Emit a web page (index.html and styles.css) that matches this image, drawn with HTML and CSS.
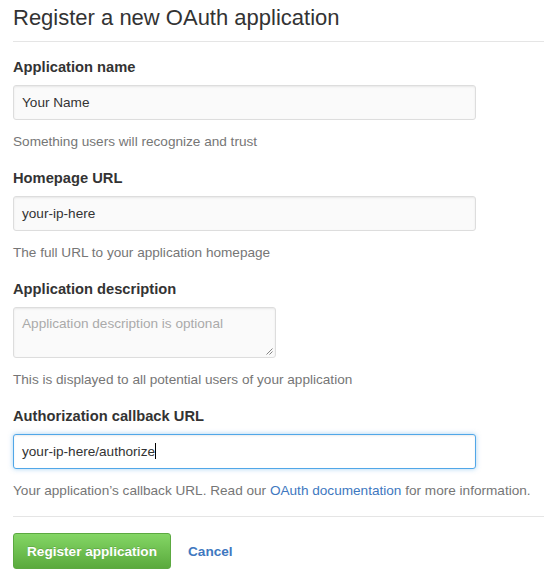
FILE: index.html
```html
<!DOCTYPE html>
<html>
<head>
<meta charset="utf-8">
<link rel="stylesheet" href="styles.css">
</head>
<body>
<div class="page">
  <h1 class="title">Register a new OAuth application</h1>
  <form class="form">
    <div class="group">
      <label class="label">Application name</label>
      <div class="input">Your Name</div>
      <p class="note">Something users will recognize and trust</p>
    </div>
    <div class="group">
      <label class="label">Homepage URL</label>
      <div class="input">your-ip-here</div>
      <p class="note">The full URL to your application homepage</p>
    </div>
    <div class="group">
      <label class="label">Application description</label>
      <div class="textarea"><span class="placeholder">Application description is optional</span>
        <svg class="grip" width="7" height="7" viewBox="0 0 7 7"><path d="M6.5 0.5 L0.5 6.5 M6.5 3.5 L3.5 6.5" stroke="#777" stroke-width="0.9" fill="none"/></svg>
      </div>
      <p class="note">This is displayed to all potential users of your application</p>
    </div>
    <div class="group">
      <label class="label">Authorization callback URL</label>
      <div class="input focused">your-ip-here/authorize<span class="caret"></span></div>
      <p class="note">Your application’s callback URL. Read our <a class="link">OAuth documentation</a> for more information.</p>
    </div>
    <div class="actions">
      <button type="button" class="btn">Register application</button>
      <a class="cancel">Cancel</a>
    </div>
  </form>
</div>
</body>
</html>
```

FILE: styles.css
```css
html, body {
  margin: 0;
  padding: 0;
  background: #fff;
}
body {
  font-family: "Liberation Sans", Arial, sans-serif;
  color: #333;
  font-size: 13.6px;
}
.page {
  padding-left: 13px;
}
.title {
  margin: 0;
  padding-top: 4px;
  line-height: 28px;
  font-size: 22px;
  font-weight: normal;
  color: #333;
  border-bottom: 1px solid #e5e5e5;
  box-sizing: border-box;
  height: 42px;
}
.form {
  padding-top: 15px;
}
.group {
  margin-bottom: 17px;
}
.label {
  display: block;
  font-weight: bold;
  font-size: 14.7px;
  line-height: 20px;
  margin-bottom: 8px;
}
.input {
  box-sizing: border-box;
  width: 463px;
  height: 35px;
  padding: 0 8px;
  line-height: 33px;
  font-size: 13.6px;
  background: #fafafa;
  border: 1px solid #ddd;
  border-radius: 3px;
  box-shadow: inset 0 1px 2px rgba(0,0,0,0.075);
  color: #333;
}
.input.focused {
  background: #fff;
  border-color: #51a7e8;
  box-shadow: inset 0 1px 2px rgba(0,0,0,0.075), 0 0 5px rgba(81,167,232,0.5);
}
.caret {
  display: inline-block;
  width: 1px;
  height: 16px;
  background: #000;
  vertical-align: middle;
  margin-top: -2px;
}
.textarea {
  position: relative;
  box-sizing: border-box;
  width: 263px;
  height: 51px;
  padding: 7px 8px;
  background: #fafafa;
  border: 1px solid #ddd;
  border-radius: 3px;
  box-shadow: inset 0 1px 2px rgba(0,0,0,0.075);
  line-height: 18px;
}
.placeholder {
  color: #aaa;
}
.grip {
  position: absolute;
  right: 2px;
  bottom: 2px;
}
.note {
  margin: 13px 0 0;
  font-size: 13.6px;
  line-height: 18px;
  color: #767676;
}
.link {
  color: #4078c0;
  text-decoration: none;
}
.actions {
  margin-top: -1px;
  border-top: 1px solid #e5e5e5;
  padding-top: 16px;
  display: flex;
  align-items: center;
  gap: 17px;
}
.btn {
  box-sizing: border-box;
  width: 158px;
  height: 36px;
  font-family: "Liberation Sans", Arial, sans-serif;
  font-size: 13.6px;
  font-weight: bold;
  color: #fff;
  text-shadow: 0 -1px 0 rgba(0,0,0,0.15);
  background: linear-gradient(#84d665, #5aaa3d);
  border: 1px solid #5ca941;
  border-radius: 3px;
  padding: 0;
}
.cancel {
  color: #4078c0;
  font-weight: bold;
  font-size: 13.6px;
}
```
